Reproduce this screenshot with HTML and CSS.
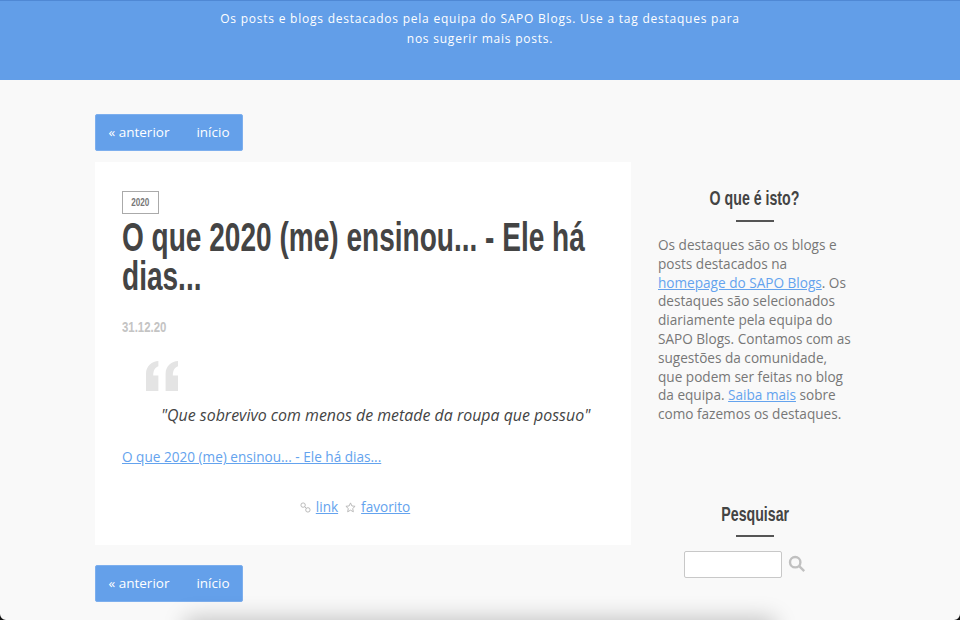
FILE: index.html
```html
<!DOCTYPE html>
<html lang="pt">
<head>
<meta charset="utf-8">
<title>Destaques</title>
<link rel="stylesheet" href="styles.css">
</head>
<body>
<header class="banner">
  <p>Os posts e blogs destacados pela equipa do SAPO Blogs. Use a tag destaques para nos sugerir mais posts.</p>
</header>
<div class="layout">
  <main class="main">
    <nav class="pager"><a>« anterior</a><a>início</a></nav>
    <article class="card">
      <div class="tag"><span>2020</span></div>
      <h1><span>O que 2020 (me) ensinou... - Ele há dias...</span></h1>
      <div class="date"><span>31.12.20</span></div>
      <blockquote>
        <svg class="mark" viewBox="0 0 31 29" width="32" height="30"><path d="M0 29V12C0 5 6 0 12 0V5C9 6 7 9 7 14H12V29Z"/><path d="M19 29V12C19 5 25 0 31 0V5C28 6 26 9 26 14H31V29Z"/></svg>
        <p>"Que sobrevivo com menos de metade da roupa que possuo"</p>
      </blockquote>
      <p class="source"><a href="#">O que 2020 (me) ensinou... - Ele há dias...</a></p>
      <div class="actions">
        <svg class="ico" viewBox="0 0 12 12" width="11" height="11"><circle cx="3.4" cy="3.4" r="2.4"/><circle cx="8.6" cy="8.6" r="2.4"/><path d="M5 5l2 2"/></svg>
        <a href="#">link</a>
        <svg class="ico star" viewBox="0 0 12 12" width="11" height="11"><path d="M6 1l1.5 3.3 3.5.4-2.6 2.4.7 3.6L6 8.9l-3.1 1.8.7-3.6L1 4.7l3.5-.4z"/></svg>
        <a href="#">favorito</a>
      </div>
    </article>
    <nav class="pager lower"><a>« anterior</a><a>início</a></nav>
  </main>
  <aside class="side">
    <section class="about">
      <h2><span>O que é isto?</span></h2>
      <p>Os destaques são os blogs e posts destacados na <a href="#">homepage do SAPO Blogs</a>. Os destaques são selecionados diariamente pela equipa do SAPO Blogs. Contamos com as sugestões da comunidade, que podem ser feitas no blog da equipa. <a href="#">Saiba mais</a> sobre como fazemos os destaques.</p>
    </section>
    <section class="search">
      <h2><span>Pesquisar</span></h2>
      <form class="search-row">
        <input type="text" aria-label="Pesquisar">
        <svg class="lens" viewBox="0 0 18 18" width="18" height="18"><circle cx="7.2" cy="7.2" r="5.2"/><path d="M11.2 11.2l5 5"/></svg>
      </form>
    </section>
  </aside>
</div>
<div class="fold"><div class="fold-shadow"></div></div>
<i class="corner left"></i><i class="corner right"></i>
</body>
</html>
```

FILE: styles.css
```css
* { box-sizing: border-box; }
html, body { height: 620px; overflow: hidden; }
body {
  margin: 0;
  background: #f9f9f9;
  color: #444;
  font-family: "Open Sans", sans-serif;
  font-size: 13.6px;
}
a { color: #64a3ee; text-decoration: underline; }

.banner {
  height: 80px;
  background: #629ee8;
  border-top: 1px solid #4f88d4;
  padding-top: 8px;
}
.banner p {
  width: 540px;
  margin: 0 auto;
  color: #fff;
  font-size: 12px;
  line-height: 20px;
  letter-spacing: .77px;
  text-align: center;
}

.layout {
  display: flex;
  padding: 34px 0 0 95px;
}
.main { width: 536px; flex: none; }

.pager {
  display: inline-flex;
  height: 37px;
  align-items: center;
  gap: 27px;
  padding: 0 12.5px 1px;
  background: #64a0ea;
  border: 1px solid #7dafee;
  border-radius: 2px;
  vertical-align: top;
}
.pager a { color: #fff; text-decoration: none; font-size: 13.5px; }
.pager.lower { margin-top: 20px; }

.card {
  margin-top: 11px;
  height: 383px;
  background: #fff;
  padding: 29px 27px 0;
}
.tag {
  width: 37px;
  height: 23px;
  border: 1px solid #aaa;
  color: #777;
  font-family: "Liberation Sans", sans-serif;
  font-weight: 700;
  font-size: 11px;
  line-height: 21px;
  text-align: center;
}
.tag span { display: inline-block; transform: scaleX(.74); }
h1, h2 {
  font-family: "Liberation Sans", sans-serif;
  font-weight: 700;
  color: #444;
  margin: 0;
}
h1 {
  font-size: 41px;
  line-height: 39px;
  margin-top: 4px;
}
h1 span {
  display: block;
  width: 708px;
  transform: scaleX(.684);
  transform-origin: left top;
}
.date {
  margin-top: 22px;
  color: #c4c4c4;
  font-family: "Liberation Sans", sans-serif;
  font-weight: 700;
  font-size: 15px;
  line-height: 18px;
}
.date span { display: inline-block; transform: scaleX(.76); transform-origin: left center; }
blockquote {
  position: relative;
  margin: 0;
  padding: 69px 0 0 39px;
}
.mark {
  position: absolute;
  left: 24px;
  top: 25px;
  fill: #e4e4e4;
}
blockquote p {
  margin: 0;
  font-style: italic;
  font-size: 15.93px;
  line-height: 20px;
  white-space: nowrap;
}
.source { margin: 22px 0 0; line-height: 20px; }
.actions {
  display: flex;
  justify-content: center;
  align-items: center;
  margin-top: 30px;
  padding-right: 16px;
  line-height: 20px;
}
.ico { fill: none; stroke: #b5b5b5; stroke-width: 1; margin-right: 5px; }
.star { margin-left: 7px; }

.side { width: 194px; margin-left: 27px; padding-top: 70px; flex: none; }
h2 {
  font-size: 21px;
  line-height: 28px;
  text-align: center;
}
h2 span { display: inline-block; transform: scaleX(.675); }
h2::after {
  content: "";
  display: block;
  width: 38px;
  height: 2px;
  margin: 8px auto 0;
  background: #555;
}
.about p {
  margin: 14px 0 0;
  color: #777;
  line-height: 18.8px;
}
.search { margin-top: 76px; }
.search h2::after { margin-top: 7px; }
.search-row {
  display: flex;
  align-items: center;
  gap: 6px;
  margin: 14px 0 0 26px;
}
.search-row input {
  width: 98px;
  height: 27px;
  background: #fff;
  border: 1px solid #c8c8c8;
  border-radius: 2px;
  padding: 0;
}
.lens { fill: none; stroke: #c0c0c0; stroke-width: 2.4; }

.fold {
  position: absolute;
  left: 160px;
  bottom: 0;
  width: 640px;
  height: 30px;
  overflow: hidden;
}
.fold-shadow {
  margin: 38px 0 0 35px;
  width: 570px;
  height: 30px;
  box-shadow: 0 0 22px 10px rgba(0, 0, 0, .22);
}
.corner {
  position: absolute;
  bottom: 0;
  width: 6px;
  height: 6px;
  background: #111;
}
.corner.left { left: 0; clip-path: path("M0 0A6 6 0 0 0 6 6H0Z"); }
.corner.right { right: 0; clip-path: path("M6 0A6 6 0 0 1 0 6H6Z"); }
```
